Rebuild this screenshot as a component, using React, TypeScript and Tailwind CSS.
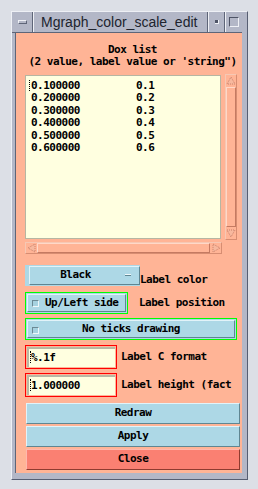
import React from "react";

const mono = "font-['DejaVu_Sans_Mono',monospace] font-bold text-[11px] tracking-[-0.5px] text-black";

const rows: [string, string][] = [
  ["0.100000", "0.1"],
  ["0.200000", "0.2"],
  ["0.300000", "0.3"],
  ["0.400000", "0.4"],
  ["0.500000", "0.5"],
  ["0.600000", "0.6"],
];

const Arrow = ({ dir }: { dir: "up" | "down" | "left" | "right" }) => {
  const pts = {
    up: "5,1 9,8 1,8",
    down: "1,2 9,2 5,9",
    left: "1,5 8,1 8,9",
    right: "2,1 9,5 2,9",
  }[dir];
  return (
    <svg width="10" height="10" viewBox="0 0 10 10">
      <polygon points={pts} fill="#f7b89e" stroke="#c9806a" strokeWidth="1" strokeDasharray="1 1" />
    </svg>
  );
};

const Check = () => (
  <span className="w-[7px] h-[7px] shrink-0 border border-t-[#6b8a95] border-l-[#6b8a95] border-r-[#eef8fb] border-b-[#eef8fb] bg-[#a6d2e0]" />
);

const Field = ({ value }: { value: string }) => (
  <div className="w-[92px] h-[24px] border border-[#ff0000] p-[1px]">
    <div className="relative h-full bg-[#ffffe0] border-t-2 border-l-2 border-t-[#b8b8a4] border-l-[#b8b8a4] flex items-center pl-[2px]">
      <span className="absolute left-[1px] top-[2px] h-[12px] border-l border-dotted border-black" />
      <span className={mono}>{value}</span>
    </div>
  </div>
);

const Button = ({ label, close }: { label: string; close?: boolean }) => (
  <div
    className={
      "h-[21px] flex items-center justify-center border " +
      (close
        ? "bg-[#fa8072] border-t-[#ffb8ae] border-l-[#ffb8ae] border-r-[#8e3b2f] border-b-[#8e3b2f]"
        : "bg-[#add8e6] border-t-[#e2f3f9] border-l-[#e2f3f9] border-r-[#5f8692] border-b-[#5f8692]")
    }
  >
    <span className={mono}>{label}</span>
  </div>
);

export default function App() {
  return (
    <div className="min-h-screen bg-[#dcdfe6] pt-[11px] pl-[11px]">
      <div className="w-[237px] bg-[#b3b7c7] border border-t-[#eef0f5] border-l-[#eef0f5] border-r-[#575e72] border-b-[#575e72]">
        {/* title bar */}
        <div className="flex h-[21px] mr-[5px] border-b border-[#5e6578] font-['Liberation_Sans',sans-serif]">
          <div className="w-[21px] flex items-center justify-center border-r border-[#5e6578]">
            <span className="w-[9px] h-[4px] border border-t-[#eef0f5] border-l-[#eef0f5] border-r-[#5e6578] border-b-[#5e6578]" />
          </div>
          <div className="w-[175px] flex items-center pl-[7px] border-l border-[#eef0f5] border-r border-r-[#5e6578]">
            <span className="w-[158px] overflow-hidden whitespace-nowrap text-[14px] text-[#20242e]">Mgraph_color_scale_edit</span>
          </div>
          <div className="w-[17px] flex items-center justify-center border-l border-[#eef0f5] border-r border-r-[#5e6578]">
            <span className="w-[4px] h-[4px] bg-[#4e5466] border-r border-b border-[#eef0f5]" />
          </div>
          <div className="w-[17px] flex items-center justify-center border-l border-[#eef0f5]">
            <span className="w-[10px] h-[10px] border border-t-[#4e5466] border-r-[#eef0f5] border-b-[#eef0f5] border-l-[#4e5466]" />
          </div>
        </div>

        {/* content */}
        <div className="ml-[3px] mr-[5px] mb-[6px] h-[440px] bg-[#ffb496] border-l border-[#5e6578] flex flex-col pt-[11px] pl-[9px] pr-[2px]">
          <div className={mono + " text-center leading-[12px] whitespace-nowrap"}>Dox list</div>
          <div className={mono + " text-center leading-[12px] whitespace-nowrap"}>(2 value, label value or 'string")</div>

          <div className="flex mt-[6px] h-[165px]">
            <div className="w-[196px] mt-[1px] h-[164px] bg-[#ffffe0] border border-[#b6b6a2] pl-[5px] pt-[4px]">
              {rows.map(([a, b], i) => (
                <div key={i} className={mono + " flex leading-[12.4px] relative"}>
                  {i === 0 && <span className="absolute -left-[2px] top-0 h-[11px] border-l border-dotted border-black" />}
                  <span className="w-[105px]">{a}</span>
                  <span>{b}</span>
                </div>
              ))}
            </div>
            <div className="ml-[4px] w-[12px] h-[166px] border border-[#f6c8b4] border-r-[#d78d72] border-b-[#d78d72] flex flex-col">
              <div className="h-[12px] flex items-center justify-center"><Arrow dir="up" /></div>
              <div className="flex-1 border border-t-[#ffd8c8] border-l-[#ffd8c8] border-r-[#c47a62] border-b-[#c47a62]" />
              <div className="h-[12px] flex items-center justify-center"><Arrow dir="down" /></div>
            </div>
          </div>

          <div className="mt-[3px] w-[197px] h-[12px] border border-[#f6c8b4] border-r-[#d78d72] border-b-[#d78d72] flex">
            <div className="w-[11px] flex items-center justify-center"><Arrow dir="left" /></div>
            <div className="flex-1 border border-t-[#ffd8c8] border-l-[#ffd8c8] border-r-[#c47a62] border-b-[#c47a62]" />
            <div className="w-[11px] flex items-center justify-center"><Arrow dir="right" /></div>
          </div>

          {/* colour */}
          <div className="flex items-start mt-[11px] h-[21px]">
            <div className="w-[115px] h-[21px] bg-[#add8e6] pl-[4px] pt-[1px] pb-[1px]">
              <div className="relative h-full border border-t-[#e2f3f9] border-l-[#e2f3f9] border-r-[#5f8692] border-b-[#5f8692] flex items-center justify-center pr-[18px]">
                <span className={mono}>Black</span>
                <span className="absolute right-[8px] top-[7px] w-[6px] h-[2px] border-t border-[#eef8fb] border-b border-b-[#5f8692]" />
              </div>
            </div>
            <span className={mono + " mt-[7px]"}>Label color</span>
          </div>

          {/* position */}
          <div className="flex items-start mt-[6px]">
            <div className="w-[103px] h-[22px] border border-[#00ff00] bg-[#add8e6] p-[1px]">
              <div className="h-full flex items-center gap-[6px] pl-[4px] border border-t-[#e2f3f9] border-l-[#e2f3f9] border-r-[#5f8692] border-b-[#5f8692]">
                <Check />
                <span className={mono}>Up/Left side</span>
              </div>
            </div>
            <span className={mono + " ml-[11px] mt-[3px]"}>Label position</span>
          </div>

          {/* ticks */}
          <div className="mt-[4px] w-[212px] h-[22px] border border-[#00ff00] bg-[#add8e6] p-[1px]">
            <div className="relative h-full flex items-center justify-center border border-t-[#e2f3f9] border-l-[#e2f3f9] border-r-[#5f8692] border-b-[#5f8692]">
              <span className="absolute left-[4px] top-[6px] flex"><Check /></span>
              <span className={mono}>No ticks drawing</span>
            </div>
          </div>

          {/* format */}
          <div className="flex items-center mt-[5px] gap-[4px]">
            <Field value="%.1f" />
            <span className={mono}>Label C format</span>
          </div>
          <div className="flex items-center mt-[4px] gap-[4px]">
            <Field value="1.000000" />
            <span className={mono + " whitespace-nowrap"}>Label height (fact</span>
          </div>

          <div className="mt-[6px] ml-[1px] flex flex-col gap-[2px]">
            <Button label="Redraw" />
            <Button label="Apply" />
            <Button label="Close" close />
          </div>
        </div>
      </div>
    </div>
  );
}
